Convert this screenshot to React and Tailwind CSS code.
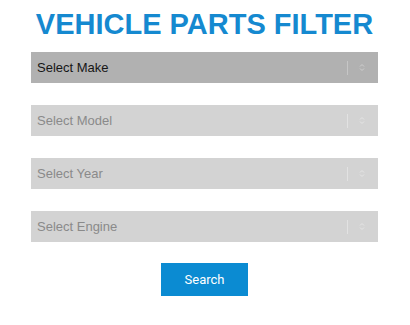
export default function App() {
  const selects = [
    { label: "Select Make", active: true },
    { label: "Select Model" },
    { label: "Select Year" },
    { label: "Select Engine" },
  ];
  return (
    <div className="w-[410px] h-[325px] bg-white" style={{ fontFamily: '"Liberation Sans", Arial, sans-serif' }}>
      <div className="ml-[31px] w-[347px] pt-[10px] flex flex-col">
        <h1 className="text-center text-[29px] leading-[29px] font-bold text-[#1589d0] whitespace-nowrap">
          VEHICLE PARTS FILTER
        </h1>
        <div className="mt-[13px] flex flex-col gap-[22px]">
          {selects.map((s) => (
            <div
              key={s.label}
              className={
                s.active
                  ? "h-[31px] flex items-center bg-[#b1b1b1] text-[#161616]"
                  : "h-[31px] flex items-center bg-[#d3d3d3] text-[#8a8a8a]"
              }
            >
              <span className="pl-[6px] text-[13px] flex-1">{s.label}</span>
              <span className={s.active ? "w-px h-[14px] bg-[#c6c6c6] mr-[11px]" : "w-px h-[14px] bg-[#e2e2e2] mr-[11px]"}></span>
              <svg width="6" height="9" viewBox="0 0 6 9" className="mr-[13px]">
                <path d="M1 3.5 L3 1.5 L5 3.5" fill="none" stroke={s.active ? "#cfcfcf" : "#e6e6e6"} strokeWidth="1" />
                <path d="M1 5.5 L3 7.5 L5 5.5" fill="none" stroke={s.active ? "#cfcfcf" : "#e6e6e6"} strokeWidth="1" />
              </svg>
            </div>
          ))}
        </div>
        <div className="mt-[21px] flex justify-center">
          <button className="w-[87px] h-[33px] bg-[#0b8bd2] text-white text-[13px]" style={{ fontFamily: 'Roboto, "Liberation Sans", sans-serif' }}>
            Search
          </button>
        </div>
      </div>
    </div>
  );
}
